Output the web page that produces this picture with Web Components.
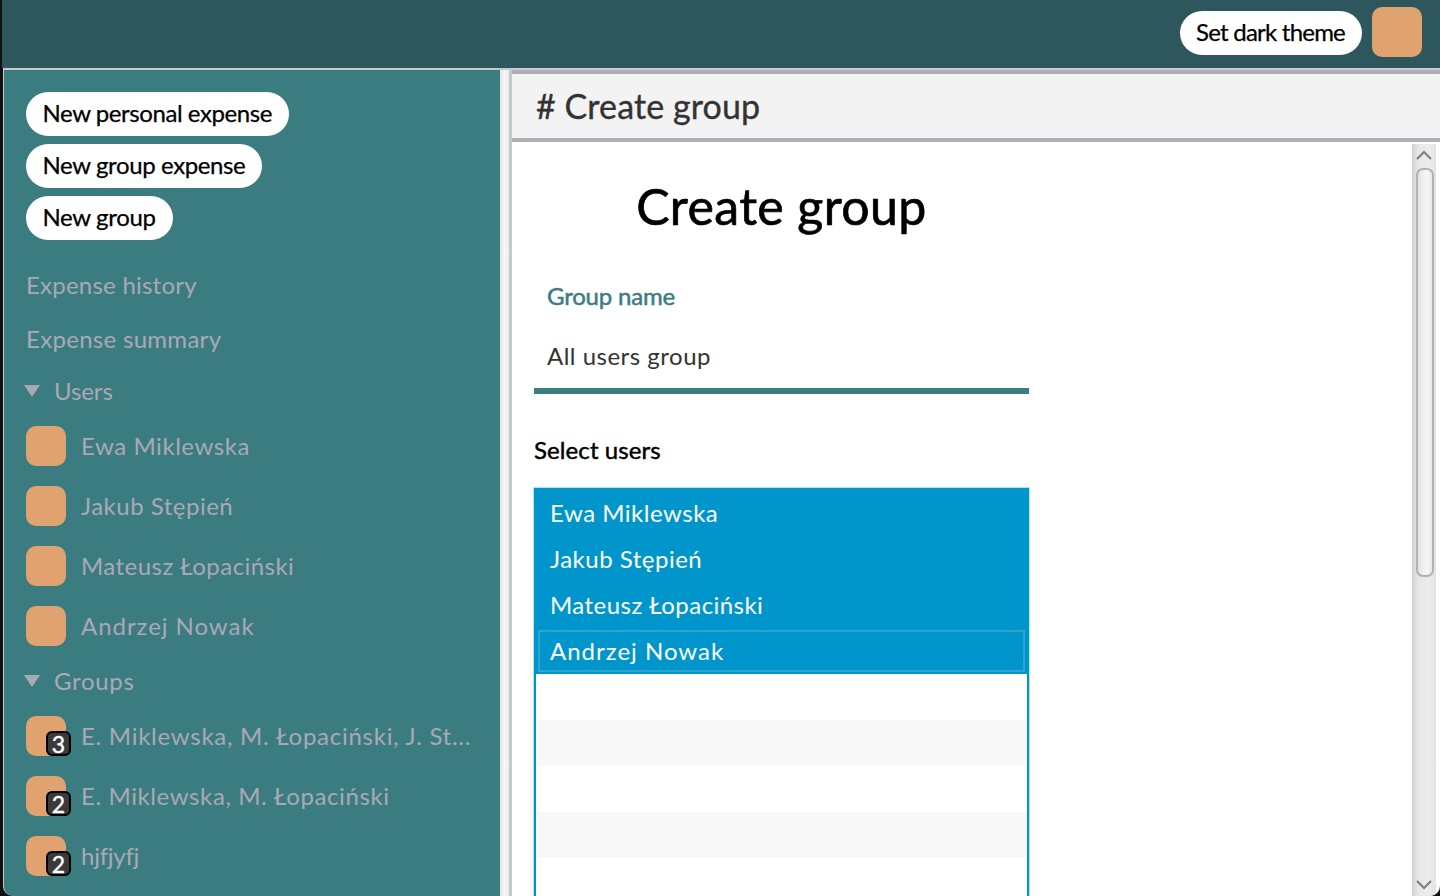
<!DOCTYPE html>
<html lang="en"><head><meta charset="utf-8"><title>Create group</title>
<style>
html,body{margin:0;height:100%;overflow:hidden;background:#111}
body{font-family:"Lato","Noto Sans",sans-serif}
</style></head><body>
<app-shell>
  <top-bar slot="top"><pill-button style="letter-spacing:-.78px;margin-top:2px">Set dark theme</pill-button><user-avatar size="50"></user-avatar></top-bar>
  <side-bar slot="side">
    <pill-button style="letter-spacing:-.43px">New personal expense</pill-button>
    <pill-button style="letter-spacing:-.38px">New group expense</pill-button>
    <pill-button style="letter-spacing:-.35px">New group</pill-button>
    <nav-link style="margin-top:23px;letter-spacing:.23px">Expense history</nav-link>
    <nav-link style="margin-top:16px;letter-spacing:.3px">Expense summary</nav-link>
    <tree-group label="Users" style="margin-top:14px" ls="-.1">
      <entity-row style="letter-spacing:.55px">Ewa Miklewska</entity-row>
      <entity-row style="letter-spacing:.5px">Jakub Stępień</entity-row>
      <entity-row style="letter-spacing:.45px">Mateusz Łopaciński</entity-row>
      <entity-row style="letter-spacing:.95px">Andrzej Nowak</entity-row>
    </tree-group>
    <tree-group label="Groups" style="margin-top:13px" ls=".7">
      <entity-row badge="3" style="letter-spacing:.73px">E. Miklewska, M. Łopaciński, J. St...</entity-row>
      <entity-row badge="2" style="letter-spacing:.6px">E. Miklewska, M. Łopaciński</entity-row>
      <entity-row badge="2" style="letter-spacing:-.25px">hjfjyfj</entity-row>
    </tree-group>
  </side-bar>
  <main-pane slot="main" heading="# Create group">
    <create-form></create-form>
  </main-pane>
</app-shell>
<script>
function def(name,css,html,init){
  customElements.define(name,class extends HTMLElement{
    connectedCallback(){
      if(this.shadowRoot)return;
      const r=this.attachShadow({mode:'open'});
      r.innerHTML='<style>'+css+'</style>'+(typeof html==='function'?html(this):html);
      if(init)init(this,r);
    }
  });
}
def('app-shell',`
:host{display:grid;grid-template-columns:497px 1fr;grid-template-rows:68px 1fr;height:896px;width:1440px;overflow:hidden;box-sizing:border-box;padding-left:3px;background:#111}
.top{grid-column:1/3;display:block;min-height:0}
.side{display:block;min-height:0;min-width:0;overflow:hidden}
.main{display:block;min-height:0;min-width:0;overflow:hidden}
`,`<div class="top"><slot name="top"></slot></div><div class="side"><slot name="side"></slot></div><div class="main"><slot name="main"></slot></div>`);
def('top-bar',`
:host{display:flex;align-items:center;justify-content:flex-end;gap:10px;height:68px;box-sizing:border-box;padding:0 18px 4px 0;background:#2e565d;margin-left:-1px}
`,`<slot></slot>`);
def('side-bar',`
:host{display:flex;flex-direction:column;align-items:flex-start;gap:8px;box-sizing:border-box;height:828px;width:497px;padding:22px 0 0 22px;background:#3b7c81;border-top:2px solid #c9c9c9;border-left:1px solid #c9c9c9;border-bottom-left-radius:10px;overflow:hidden}
`,`<slot></slot>`);
def('pill-button',`
:host{display:inline-flex;align-items:center;height:44px;box-sizing:border-box;padding:0 17px 3px 16.5px;background:#fff;border-radius:22px;color:#000;font-size:24px;font-weight:400;white-space:nowrap;-webkit-text-stroke:.25px #000}
`,`<slot></slot>`);
def('nav-link',`
:host{display:block;color:#aaa9b4;font-size:24px;line-height:28px;padding-bottom:2px}
`,`<slot></slot>`);
def('tree-group',`
:host{display:block;color:#aaa9b4;font-size:24px;align-self:stretch;margin-left:-2px}
.h{display:flex;align-items:center;gap:14px;height:30px;line-height:28px}
.t{width:0;height:0;border-left:8px solid transparent;border-right:8px solid transparent;border-top:12px solid #aaa9b4;margin-top:-2px}
.l{padding-bottom:2px}
.b{display:flex;flex-direction:column;gap:20px;padding:19px 0 0 2px}
`,(h)=>`<div class="h"><span class="t"></span><span class="l" style="letter-spacing:${h.getAttribute('ls')}px">${h.getAttribute('label')}</span></div><div class="b"><slot></slot></div>`);
def('user-avatar',`
:host{display:block;position:relative;flex:none;background:#e0a370;border-radius:10px}
.n{position:absolute;left:20px;top:15px;width:25px;height:25px;box-sizing:border-box;background:#3a3a3a;border:2px solid #000;border-radius:6px;color:#fff;font-size:23px;line-height:22px;text-align:center;letter-spacing:0;-webkit-text-stroke:.4px #fff}
`,(h)=>h.hasAttribute('badge')?`<span class="n">${h.getAttribute('badge')}</span>`:'',(h)=>{const s=(h.getAttribute('size')||40)+'px';h.style.width=s;h.style.height=s;});
def('entity-row',`
:host{display:flex;align-items:center;gap:15px;height:40px;color:#aaa9b4;font-size:24px;white-space:nowrap}
.t{padding-bottom:1px}
`,(h)=>`<user-avatar size="40" ${h.hasAttribute('badge')?`badge="${h.getAttribute('badge')}"`:''}></user-avatar><span class="t"><slot></slot></span>`);
def('main-pane',`
:host{display:grid;grid-template-columns:12px 1fr;height:828px;border-top:2px solid #c9c9c9;box-sizing:border-box;background:#fff;border-bottom-right-radius:10px;overflow:hidden}
.g{background:linear-gradient(90deg,#e4e4e4 0,#f7f7f7 40%,#ededed 72%,#c8c8c8 78%,#c8c8c8 100%)}
.c{display:flex;flex-direction:column;min-width:0;min-height:0}
.hd{height:72px;box-sizing:border-box;flex:none;border-top:4px solid #b0afb8;border-bottom:4px solid #b0afb8;background:#f3f3f3;color:#333;font-size:34px;line-height:64px;padding-left:24px;letter-spacing:.1px;-webkit-text-stroke:.35px #333}
.b{flex:1;display:flex;min-height:0}
.s{flex:1;min-width:0;overflow:hidden}
`,(h)=>`<div class="g"></div><div class="c"><div class="hd">${h.getAttribute('heading')}</div><div class="b"><div class="s"><slot></slot></div><v-scrollbar></v-scrollbar></div></div>`);
def('v-scrollbar',`
:host{display:flex;flex-direction:column;align-items:center;flex:none;width:24px;margin:2px 4px 0 0;box-sizing:border-box;background:linear-gradient(90deg,#d2d2d2 0,#e6e6e6 25%,#ececec 70%,#e2e2e2 100%)}
svg{display:block;flex:none}
.th{width:18px;height:409px;box-sizing:border-box;margin-top:8px;margin-left:2px;border:2px solid #b2b2b2;border-radius:7px;background:linear-gradient(90deg,#e2e2e2,#f6f6f6 60%,#eaeaea)}
.sp{flex:1}
`,`<svg width="16" height="10" viewBox="0 0 16 10" style="margin-top:6px"><path d="M1 9l7-7 7 7" fill="none" stroke="#7e7e7e" stroke-width="2"/></svg>
<div class="th"></div><div class="sp"></div>
<svg width="16" height="10" viewBox="0 0 16 10" style="margin-bottom:6px"><path d="M1 1l7 7 7-7" fill="none" stroke="#7e7e7e" stroke-width="2"/></svg>`);
def('create-form',`
:host{display:block;width:495px;margin-left:22px;color:#000;box-sizing:border-box;height:800px}
h1{margin:0;padding-top:32px;text-align:center;font-size:50px;line-height:64px;font-weight:400;letter-spacing:.4px;-webkit-text-stroke:.7px #000;padding-bottom:1px}
.lab{color:#3c7c82;font-size:24px;font-weight:400;line-height:30px;padding:42px 0 0 13px;letter-spacing:-.2px;-webkit-text-stroke:.5px #3c7c82}
.val{padding:30px 0 0 13px;box-sizing:content-box;height:47px;line-height:30px;color:#333;font-size:24px;letter-spacing:.5px;border-bottom:6px solid #3c7c82}
.sel{font-size:24px;font-weight:400;line-height:30px;margin-top:41px;padding-bottom:1px;letter-spacing:.1px;-webkit-text-stroke:.45px #000}
user-list{margin-top:22px}
`,`<h1>Create group</h1>
<div class="lab">Group name</div>
<div class="val">All users group</div>
<div class="sel">Select users</div>
<user-list></user-list>`);
def('user-list',`
:host{display:block;box-sizing:border-box;width:495px;height:500px;border:2px solid #0096cc;outline:1px solid #b5e2f3;outline-offset:0;background:#fff;font-size:24px;color:#fff}
.wrap{background:#0096cc;display:flow-root}
.o{height:46px;line-height:46px;padding-left:14px;box-sizing:border-box}
.o.f{box-shadow:inset 0 0 0 2px #2ba5d3;margin:2px 2px;padding-left:12px;height:42px;line-height:42px}
.w{height:46px}
.z{background:#f8f8f8}
`,`<div class="wrap"><div class="o" style="letter-spacing:.5px">Ewa Miklewska</div><div class="o" style="letter-spacing:.5px">Jakub Stępień</div><div class="o" style="letter-spacing:.45px">Mateusz Łopaciński</div><div class="o f" style="letter-spacing:1px">Andrzej Nowak</div></div>
<div class="w"></div><div class="w z"></div><div class="w"></div><div class="w z"></div><div class="w"></div>`);
</script>
</body></html>
